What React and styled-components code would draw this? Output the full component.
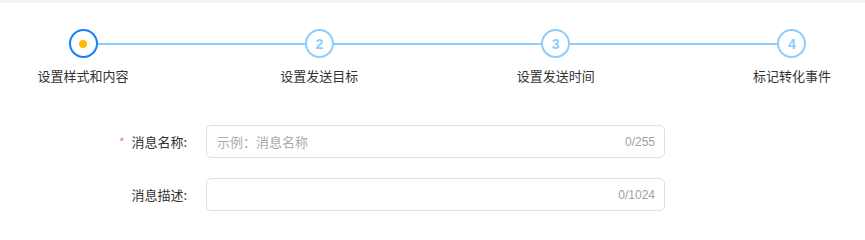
import React from 'react';
import styled, { createGlobalStyle } from 'styled-components';

const GlobalStyle = createGlobalStyle`
  body {
    margin: 0;
    background: #fff;
    font-family: "Liberation Sans", "Noto Sans CJK SC", sans-serif;
  }
`;

const Page = styled.div`
  width: 865px;
  height: 232px;
  border-top: 3px solid #f4f4f5;
  box-sizing: border-box;
  background: #fff;
`;

const Steps = styled.div`
  position: relative;
  display: flex;
  justify-content: space-between;
  padding: 26px 23px 0 33px;
`;

const Track = styled.div`
  position: absolute;
  left: 83px;
  right: 73px;
  top: 39.5px;
  height: 2px;
  background: #8ccfff;
`;

const Step = styled.div`
  position: relative;
  width: 100px;
  display: flex;
  flex-direction: column;
  align-items: center;
`;

const Circle = styled.div`
  width: 29px;
  height: 29px;
  box-sizing: border-box;
  border-radius: 50%;
  border: 2.5px solid ${p => (p.active ? '#1580ff' : '#8ccfff')};
  background: #fff;
  display: flex;
  align-items: center;
  justify-content: center;
  color: #8ccfff;
  font-size: 14px;
  font-weight: 700;
`;

const Dot = styled.span`
  width: 8px;
  height: 8px;
  border-radius: 50%;
  background: #ffb900;
`;

const StepLabel = styled.div`
  margin-top: 9px;
  font-size: 13px;
  line-height: 18px;
  color: #333;
  white-space: nowrap;
  font-family: "Noto Sans CJK SC", sans-serif;
`;

const Form = styled.div`
  display: flex;
  flex-direction: column;
  gap: 20px;
  margin-top: 40px;
`;

const Row = styled.div`
  display: flex;
  align-items: center;
`;

const Label = styled.div`
  width: 206px;
  padding-right: 19px;
  box-sizing: border-box;
  text-align: right;
  font-size: 13px;
  color: #333;
  font-family: "Noto Sans CJK SC", sans-serif;
`;

const Required = styled.span`
  color: #f56c6c;
  font-size: 11px;
  margin-right: 7px;
  vertical-align: 1px;
`;

const Field = styled.div`
  width: 459px;
  height: 33px;
  box-sizing: border-box;
  border: 1px solid #dcdfe6;
  border-radius: 5px;
  display: flex;
  align-items: center;
  padding: 0 9px 0 10px;
`;

const Placeholder = styled.span`
  flex: 1;
  font-size: 13px;
  color: #a8abb2;
  font-family: "Noto Sans CJK SC", sans-serif;
`;

const Count = styled.span`
  font-size: 12px;
  color: #a0a0a0;
`;

const steps = ['设置样式和内容', '设置发送目标', '设置发送时间', '标记转化事件'];

export default function App() {
  return (
    <Page>
      <GlobalStyle />
      <Steps>
        <Track />
        {steps.map((s, i) => (
          <Step key={s}>
            <Circle active={i === 0}>{i === 0 ? <Dot /> : i + 1}</Circle>
            <StepLabel>{s}</StepLabel>
          </Step>
        ))}
      </Steps>
      <Form>
        <Row>
          <Label><Required>*</Required>消息名称:</Label>
          <Field>
            <Placeholder>示例：消息名称</Placeholder>
            <Count>0/255</Count>
          </Field>
        </Row>
        <Row>
          <Label>消息描述:</Label>
          <Field>
            <Placeholder />
            <Count>0/1024</Count>
          </Field>
        </Row>
      </Form>
    </Page>
  );
}
